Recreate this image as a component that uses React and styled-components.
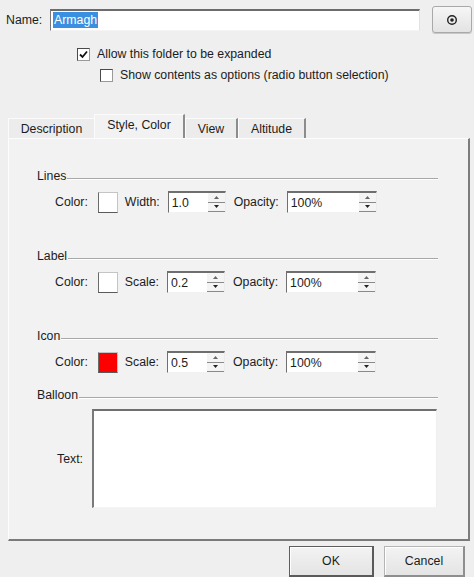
import React from "react";
import styled, { createGlobalStyle } from "styled-components";

const GlobalStyle = createGlobalStyle`
  html, body {
    margin: 0;
    padding: 0;
    background: #efefef;
  }
  body {
    font-family: "Liberation Sans", Arial, sans-serif;
    font-size: 12.3px;
    color: #1c1c1c;
    overflow: hidden;
  }
`;

const Dialog = styled.div`
  width: 474px;
  height: 577px;
  overflow: hidden;
  display: flex;
  flex-direction: column;
  background: #efefef;
`;

const NameRow = styled.div`
  display: flex;
  align-items: center;
  height: 27px;
  padding: 6px 0 0 6px;
`;

const NameLabel = styled.span`
  width: 44px;
`;

const NameInput = styled.div`
  width: 366px;
  height: 19px;
  box-sizing: content-box;
  background: #fff;
  border-top: 2px solid #6c6c6c;
  border-left: 1px solid #7a7a7a;
  border-right: 1px solid #e2e2e2;
  border-bottom: 1px solid #f4f4f4;
  display: flex;
  align-items: center;
  padding-left: 2px;

  span {
    background: #3b8fe0;
    color: #fff;
    padding: 1px 1px;
  }
`;

const IconButton = styled.div`
  width: 38px;
  height: 25px;
  margin-left: 12px;
  border: 1px solid #a9a9a9;
  border-radius: 3px;
  background: linear-gradient(#f6f6f6, #e3e3e3);
  display: flex;
  align-items: center;
  justify-content: center;
  box-shadow: 0 1px 0 #c8c8c8;
`;

const CheckRow = styled.div`
  display: flex;
  align-items: center;
  height: 16px;
  margin-top: ${(p) => p.$top}px;
  padding-left: ${(p) => p.$indent}px;
  gap: 7px;
`;

const Box = styled.div`
  width: 11px;
  height: 11px;
  background: #fff;
  border: 1px solid #9a9a9a;
  border-top-color: #4a4a4a;
  border-left-color: #4a4a4a;
  display: flex;
  align-items: center;
  justify-content: center;
`;

const TabBar = styled.div`
  display: flex;
  align-items: flex-end;
  margin-top: 31px;
  padding-left: 8px;
  height: 24px;
`;

const Tab = styled.div`
  width: ${(p) => p.$w}px;
  height: ${(p) => (p.$active ? 24 : 20)}px;
  box-sizing: border-box;
  display: flex;
  align-items: center;
  justify-content: center;
  padding-bottom: ${(p) => (p.$active ? 3 : 0)}px;
  background: ${(p) => (p.$active ? "#f2f2f2" : "#ececec")};
  border-top: 1px solid #fbfbfb;
  border-left: 1px solid #fbfbfb;
  border-right: ${(p) => (p.$edge ? "2px solid #8c8c8c" : "none")};
`;

const Panel = styled.div`
  margin: 0 4px 0 8px;
  height: 403px;
  box-sizing: border-box;
  background: #f2f2f2;
  border-top: 1px solid #fdfdfd;
  border-left: 1px solid #fdfdfd;
  border-right: 2px solid #7d7d7d;
  border-bottom: 2px solid #7a7a7a;
  padding: 30px 30px 0 28px;
  display: flex;
  flex-direction: column;
`;

const Group = styled.div`
  margin-top: ${(p) => p.$gap}px;
`;

const GroupTitle = styled.div`
  display: flex;
  height: 14px;
  line-height: 14px;

  &::after {
    content: "";
    flex: 1;
    align-self: flex-end;
    margin: 0 0 3px 1px;
    border-top: 1px solid #a8a8a8;
    border-bottom: 1px solid #fff;
  }
`;

const FieldRow = styled.div`
  display: flex;
  align-items: center;
  gap: 8px;
  height: 22px;
  margin-top: 8px;
  padding-left: 18px;
`;

const Swatch = styled.div`
  width: 18px;
  height: 19px;
  margin: 0 -1px 0 2px;
  background: ${(p) => p.$color};
  border: 1px solid #c4c4c4;
  border-left-color: #6a6a6a;
  border-bottom-color: #5a5a5a;
`;

const Spin = styled.div`
  width: ${(p) => p.$w}px;
  height: 22px;
  box-sizing: border-box;
  display: flex;
  background: #fff;
  border-top: 2px solid #6f6f6f;
  border-left: 1px solid #6f6f6f;
  border-right: 1px solid #ececec;
  border-bottom: 1px solid #f2f2f2;
`;

const SpinValue = styled.div`
  flex: 1;
  padding-left: 3px;
  display: flex;
  align-items: center;
`;

const SpinArrows = styled.div`
  width: 17px;
  display: flex;
  flex-direction: column;
  background: #f4f4f4;
  border-bottom: 1px solid #8a8a8a;
`;

const Arrow = styled.div`
  flex: 1;
  display: flex;
  align-items: center;
  justify-content: center;
  border-top: ${(p) => (p.$down ? "1px solid #8a8a8a" : "none")};
`;

const BalloonRow = styled.div`
  display: flex;
  align-items: center;
  gap: 9px;
  margin-top: 7px;
  padding-left: 18px;
`;

const TextLabel = styled.span`
  width: 28px;
  text-align: right;
`;

const TextArea = styled.div`
  flex: 1;
  margin-right: 1px;
  height: 99px;
  box-sizing: border-box;
  background: #fff;
  border-top: 2px solid #6f6f6f;
  border-left: 2px solid #7a7a7a;
  border-right: 1px solid #efefef;
  border-bottom: 1px solid #f4f4f4;
`;

const Footer = styled.div`
  display: flex;
  justify-content: flex-end;
  gap: 10px;
  padding-right: 9px;
  margin-top: 5px;
`;

const Button = styled.div`
  width: ${(p) => p.$w}px;
  height: 31px;
  box-sizing: border-box;
  display: flex;
  align-items: center;
  justify-content: center;
  background: linear-gradient(#f3f3f3, #e4e4e4);
  border: 1px solid ${(p) => (p.$primary ? "#5e5e5e" : "#b4b4b4")};
  border-right: 2px solid ${(p) => (p.$primary ? "#5a5a5a" : "#8e8e8e")};
  border-bottom: 2px solid ${(p) => (p.$primary ? "#5a5a5a" : "#8e8e8e")};
  box-shadow: inset 1px 1px 0 #fff;
`;

function Check({ checked }) {
  return (
    <Box>
      {checked && (
        <svg width="9" height="9" viewBox="0 0 9 9">
          <path d="M1 4.5 L3.5 7 L8 1.5" fill="none" stroke="#111" strokeWidth="1.8" />
        </svg>
      )}
    </Box>
  );
}

function SpinBox({ value, w }) {
  return (
    <Spin $w={w}>
      <SpinValue>{value}</SpinValue>
      <SpinArrows>
        <Arrow>
          <svg width="5" height="3" viewBox="0 0 5 3">
            <path d="M2.5 0 L5 3 L0 3 Z" fill="#666" />
          </svg>
        </Arrow>
        <Arrow $down>
          <svg width="5" height="3" viewBox="0 0 5 3">
            <path d="M0 0 L5 0 L2.5 3 Z" fill="#222" />
          </svg>
        </Arrow>
      </SpinArrows>
    </Spin>
  );
}

function StyleGroup({ title, gap, color, second, value }) {
  return (
    <Group $gap={gap}>
      <GroupTitle>{title}</GroupTitle>
      <FieldRow>
        <span>Color:</span>
        <Swatch $color={color} />
        <span>{second}:</span>
        <SpinBox value={value} w={58} />
        <span>Opacity:</span>
        <SpinBox value="100%" w={90} />
      </FieldRow>
    </Group>
  );
}

export default function App() {
  return (
    <Dialog>
      <GlobalStyle />
      <NameRow>
        <NameLabel>Name:</NameLabel>
        <NameInput>
          <span>Armagh</span>
        </NameInput>
        <IconButton>
          <svg width="12" height="12" viewBox="0 0 12 12">
            <circle cx="6" cy="6" r="4.3" fill="none" stroke="#222" strokeWidth="1.4" />
            <circle cx="6" cy="6" r="1.8" fill="#222" />
          </svg>
        </IconButton>
      </NameRow>

      <CheckRow $top={13} $indent={77}>
        <Check checked />
        <span>Allow this folder to be expanded</span>
      </CheckRow>
      <CheckRow $top={5} $indent={100}>
        <Check />
        <span>Show contents as options (radio button selection)</span>
      </CheckRow>

      <TabBar>
        <Tab $w={86}>Description</Tab>
        <Tab $w={91} $active $edge>
          Style, Color
        </Tab>
        <Tab $w={53} $edge>
          View
        </Tab>
        <Tab $w={68} $edge>
          Altitude
        </Tab>
      </TabBar>

      <Panel>
        <StyleGroup title="Lines" gap={0} color="#fff" second="Width" value="1.0" />
        <StyleGroup title="Label" gap={36} color="#fff" second="Scale" value="0.2" />
        <StyleGroup title="Icon" gap={36} color="#f00" second="Scale" value="0.5" />
        <Group $gap={15}>
          <GroupTitle>Balloon</GroupTitle>
          <BalloonRow>
            <TextLabel>Text:</TextLabel>
            <TextArea />
          </BalloonRow>
        </Group>
      </Panel>

      <Footer>
        <Button $w={85} $primary>
          OK
        </Button>
        <Button $w={81}>Cancel</Button>
      </Footer>
    </Dialog>
  );
}
